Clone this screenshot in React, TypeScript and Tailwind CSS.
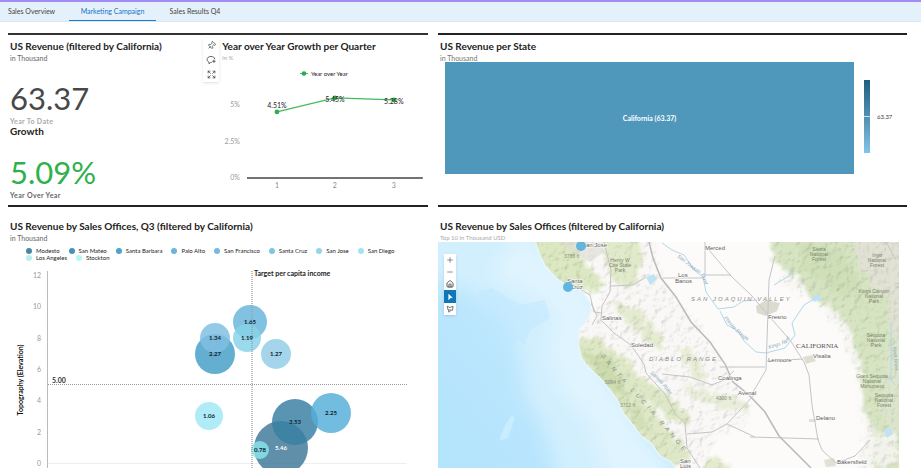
import React from "react";
import { Expand, Home, Minus, Pin, Plus } from "lucide-react";

const tabs = ["Sales Overview", "Marketing Campaign", "Sales Results Q4"];

type Pt = { x: number; y: number; label: string };

const quarters: Pt[] = [
  { x: 277, y: 112, label: "4.51%" },
  { x: 335, y: 98, label: "5.45%" },
  { x: 394, y: 100, label: "5.28%" },
];

const offices = [
  { name: "Modesto", color: "#4a87a3" },
  { name: "San Mateo", color: "#4793b4" },
  { name: "Santa Barbara", color: "#4da3cb" },
  { name: "Palo Alto", color: "#68b6dc" },
  { name: "San Francisco", color: "#78b9dd" },
  { name: "Santa Cruz", color: "#82c3e3" },
  { name: "San Jose", color: "#93d6ea" },
  { name: "San Diego", color: "#a2e4f5" },
  { name: "Los Angeles", color: "#b8eff5" },
  { name: "Stockton", color: "#b5f7f3" },
];

const bubbles = [
  { x: 281, y: 448, r: 27, color: "#3f7898", label: "5.46", light: true },
  { x: 295, y: 422, r: 23, color: "#377fa2", label: "3.53" },
  { x: 215, y: 354, r: 20, color: "#449dc6", label: "2.27" },
  { x: 331, y: 413, r: 20, color: "#54afd8", label: "2.25" },
  { x: 250, y: 322, r: 17, color: "#68b6dc", label: "1.65" },
  { x: 215, y: 338, r: 15, color: "#80bfe2", label: "1.34" },
  { x: 276, y: 354, r: 15, color: "#92cce6", label: "1.27" },
  { x: 247, y: 338, r: 14, color: "#86d2e8", label: "1.19" },
  { x: 209, y: 416, r: 14, color: "#a0e8f5", label: "1.06" },
  { x: 260, y: 450, r: 9, color: "#88e4ea", label: "0.78" },
];

const cities: Pt[] = [
  { x: 586, y: 247, label: "an Jose" },
  { x: 567, y: 283, label: "Santa" },
  { x: 570, y: 289, label: "Cruz" },
  { x: 705, y: 250, label: "Merced" },
  { x: 678, y: 277, label: "Los" },
  { x: 675, y: 283, label: "Banos" },
  { x: 602, y: 320, label: "Salinas" },
  { x: 631, y: 347, label: "Soledad" },
  { x: 718, y: 380, label: "Coalinga" },
  { x: 738, y: 395, label: "Avenal" },
  { x: 768, y: 319, label: "Fresno" },
  { x: 813, y: 358, label: "Visalia" },
  { x: 768, y: 362, label: "Lemoore" },
  { x: 816, y: 420, label: "Delano" },
  { x: 837, y: 464, label: "Bakersfield" },
  { x: 680, y: 463, label: "San" },
  { x: 680, y: 468, label: "Luis" },
];

const parks: { x: number; y: number; lines: string[] }[] = [
  { x: 620, y: 262, lines: ["Henry W", "Coe State", "Park"] },
  { x: 819, y: 251, lines: ["Sierra", "National", "Forest"] },
  { x: 877, y: 257, lines: ["Inyo", "National", "Forest"] },
  { x: 874, y: 293, lines: ["Kings Canyon", "National", "Park"] },
  { x: 876, y: 337, lines: ["Sequoia", "National", "Park"] },
  { x: 872, y: 378, lines: ["Giant Sequoia", "National", "Monument"] },
  { x: 884, y: 397, lines: ["Sequoia", "National", "Forest"] },
];

const peaks: Pt[] = [
  { x: 564, y: 258, label: "3786 ft" },
  { x: 605, y: 384, label: "5064 ft" },
  { x: 620, y: 407, label: "3712 ft" },
  { x: 716, y: 400, label: "4300 ft" },
];

function Title({ children }: { children: React.ReactNode }) {
  return <h2 className="whitespace-nowrap text-[10px] leading-4 font-bold text-[#222]">{children}</h2>;
}

function GrowthChart() {
  return (
    <svg viewBox="222 62 206 140" className="block h-auto w-full" role="img" aria-label="Year over Year growth line chart">
      <path d="M300 73.500h8" stroke="#3fb558" strokeWidth="1" />
      <circle cx="304" cy="73.500" r="2.300" fill="#2fa84a" />
      <text x="311" y="76" className="fill-[#222] text-[6px]">Year over Year</text>
      <g className="fill-[#999] text-[7px]" textAnchor="end">
        <text x="240" y="107">5%</text>
        <text x="240" y="144">2.5%</text>
        <text x="240" y="180">0%</text>
      </g>
      <path d="M247 178h176" stroke="#444" strokeWidth="1.500" />
      <polyline points={quarters.map((q) => `${q.x},${q.y}`).join(" ")} fill="none" stroke="#45b95c" strokeWidth="1.200" />
      {quarters.map((q, i) => (
        <g key={q.label} textAnchor="middle">
          <circle cx={q.x} cy={q.y} r="2.400" fill="#2fb04c" />
          <text x={q.x} y={i === 0 ? 108 : q.y + 4} className="fill-[#222] text-[7px]">{q.label}</text>
          <text x={q.x} y="188" className="fill-[#888] text-[7px]">{i + 1}</text>
        </g>
      ))}
    </svg>
  );
}

function BubbleChart() {
  return (
    <svg viewBox="8 262 420 206" className="block h-auto w-full" role="img" aria-label="Revenue by sales office bubble chart">
      <g className="fill-[#999] text-[7px]" textAnchor="end">
        {[12, 10, 8, 6, 4, 2, 0].map((v, i) => (
          <text key={v} x="41" y={278 + i * 31.300}>{v}</text>
        ))}
      </g>
      <path d="M47.500 271v197" stroke="#bbb" />
      <path d="M48 463.500h359" stroke="#eee" />
      <text transform="translate(23 380) rotate(-90)" textAnchor="middle" className="fill-[#111] text-[7px] font-bold">
        Topography (Elevation)
      </text>
      {bubbles.map((b) => (
        <circle key={b.label} cx={b.x} cy={b.y} r={b.r} fill={b.color} fillOpacity=".83" />
      ))}
      <path d="M48 384.500h360M252 271v197" stroke="#999" strokeWidth="1.200" strokeDasharray="1 1" />
      <text x="52" y="383" className="fill-[#333] text-[7px] font-bold">5.00</text>
      <text x="254" y="276" className="fill-[#222] text-[7px] font-bold">Target per capita income</text>
      {bubbles.map((b) => (
        <text
          key={b.label}
          x={b.x}
          y={b.y + 2}
          textAnchor="middle"
          className={b.light ? "fill-white text-[6px] font-bold" : "fill-[#0d2333] text-[6px] font-bold"}
        >
          {b.label}
        </text>
      ))}
    </svg>
  );
}

function CaliforniaMap() {
  const coast =
    "M536 242L540 254L546 266L556 277L568 286L576 287L584 292L591 303L591 313L586 323L580 330L579 345L582 358L589 367L600 377L610 389L618 400L624 413L634 425L640 434L652 443L660 455L672 462L676 468";
  return (
    <svg viewBox="438 242 461 226" className="block h-auto w-full" role="img" aria-label="Map of central California">
      <defs>
        <filter id="relief" x="-10%" y="-10%" width="120%" height="120%" colorInterpolationFilters="sRGB">
          <feTurbulence type="fractalNoise" baseFrequency=".14" numOctaves="3" seed="4" result="n" />
          <feDisplacementMap in="SourceGraphic" in2="n" scale="16" xChannelSelector="R" yChannelSelector="G" result="d" />
          <feGaussianBlur in="d" stdDeviation="1.500" result="s" />
          <feDiffuseLighting in="n" surfaceScale=".6" diffuseConstant="1.160" lightingColor="#fff" result="l">
            <feDistantLight azimuth="225" elevation="60" />
          </feDiffuseLighting>
          <feComposite in="l" in2="s" operator="in" result="c" />
          <feBlend in="c" in2="s" mode="multiply" />
        </filter>
        <filter id="soft" x="-20%" y="-20%" width="140%" height="140%">
          <feGaussianBlur stdDeviation="9" />
        </filter>
        <linearGradient id="sea" x1="0" x2="1" y1=".7" y2=".3">
          <stop offset="0" stopColor="#b5e4fd" />
          <stop offset=".5" stopColor="#c6ebfe" />
          <stop offset="1" stopColor="#dcf3fe" />
        </linearGradient>
        <clipPath id="land">
          <path d={`${coast}H899V242Z`} />
        </clipPath>
        <path id="lucia" d="M601 356L614 372L632 392L650 412L668 433L688 457" />
        <path id="sj" d="M677 257L690 267L701 275L709 293L716 306" />
        <path id="slough" d="M724 318L734 330L746 340L758 347" />
        <path id="salinasriver" d="M650 373L661 384L671 396L677 405" />
        <path id="kings" d="M769 349L787 343L793 330L797 318" />
        <path id="kern" d="M893 347L896 380" />
      </defs>
      <rect x="438" y="242" width="461" height="226" fill="url(#sea)" />
      <g filter="url(#soft)">
        <path d="M420 220H560L600 300L600 385L640 440L690 490H560L545 430L525 395L520 360L515 335L500 315L480 295L420 275Z" fill="#d2effe" />
        <path d="M520 230L600 300L600 360L650 440L690 490H610L590 425L560 390L548 350L555 315L530 295L490 275Z" fill="#dff4fe" />
      </g>
      <path d="M478 292L492 288L520 305L545 300L550 318L530 330L524 345L518 338L511 347L500 350L485 336L492 315Z" fill="#bde7fd" opacity=".5" />
      <path d="M505 425L512 415L515 418L508 438L499 441Z" fill="#cdeefe" opacity=".8" />
      <path d={coast} fill="none" stroke="#ecf9fe" strokeWidth="3" opacity=".6" />
      <g clipPath="url(#land)">
        <rect x="530" y="242" width="369" height="226" fill="#fcfbfa" />
        <g filter="url(#relief)">
          <path d="M526 232H655L665 280L700 325L735 375L752 405L748 425L715 438L700 478H655L560 370V320L600 300Z" fill="#faf8f6" />
          <path d="M780 285L812 300L840 330L858 380L864 430L855 478H909V232H790Z" fill="#f8f7f3" />
          <path d="M524 232H575L582 262L597 275L605 283L598 294L583 291L568 294L550 284L535 268Z" fill="#dce8c1" />
          <path d="M602 235H638L644 262L634 286L614 284L606 262Z" fill="#e1eaca" />
          <path d="M612 303L640 310L656 330L664 347L650 347L627 324Z" fill="#e4ebd0" />
          <path d="M572 340L598 338L623 356L640 378L668 393L692 420L686 428L665 414L646 398L660 420L684 445L688 464L665 466L638 440L612 412L592 380L572 362Z" fill="#dee8c6" />
          <path d="M582 352L606 354L624 380L630 395L616 396L595 378Z" fill="#ccdcae" />
          <path d="M618 396L634 400L648 424L650 436L634 424Z" fill="#d2e0b8" />
          <path d="M676 345L692 350L702 365L708 385L694 380L684 362Z" fill="#e7edd6" />
          <path d="M684 382L704 390L730 396L748 406L738 413L714 406L690 396Z" fill="#e9eeda" />
          <path d="M702 457L722 457L736 478H706Z" fill="#e3ebcf" />
          <path d="M767 230H910V480H870L878 440L862 405L861 370L850 330L834 310L812 296L795 276L774 262Z" fill="#d6e4c2" />
          <path d="M800 242L840 248L860 280L870 330L862 300L830 290L804 270Z" fill="#cfdfb8" />
          <path d="M852 230H910V350L888 330L890 300L870 285L858 262Z" fill="#e1e1d4" />
          <path d="M890 340L908 330V432L890 438L880 410Z" fill="#dce5cb" />
          <path d="M868 440L890 430L904 450L880 474Z" fill="#f2f3ea" />
        </g>
        <path d="M557 242H600L604 252L590 262L574 252Z" fill="#dcdbd3" opacity=".6" />
        <path d="M756 306L766 300L780 303L777 311L766 316L757 313Z" fill="#dddbcf" />
        <path d="M803 357L812 355L816 361L806 364Z" fill="#e0ddd2" />
        <path d="M809 419h7v3h-7ZM824 460L834 458L836 466L826 467Z" fill="#e3e0d5" />
        <path d="M646 277L654 274L657 279L650 285ZM812 297L818 294L822 299L814 302ZM884 430L891 427L893 434L887 438Z" fill="#bfe3f4" />
        <g fill="none" stroke="#b0d8ea" strokeWidth="1">
          <path d="M662 243L672 250L684 255L694 270L703 277L706 292L718 309L734 307L743 301L757 300" />
          <path d="M720 311L727 325L738 331L744 341L756 352L766 353L785 348L795 335L792 323L804 305L814 299" />
          <path d="M774 285L789 276L792 268" />
          <path d="M891 322V380L896 385" />
        </g>
        <g fill="none" stroke="#c4c4c8" strokeWidth="1">
          <path d="M705 242V275M663 278L703 278L706 275H731" />
          <path d="M709 250L731 276L752 296L768 315L790 340L804 362L809 375L812 405L818 440L822 450L836 463" />
          <path d="M775 256L769 280L766 370L753 392" />
          <path d="M720 367H765M767 361L803 359M750 437L786 438L819 439M755 437L727 424L754 395" />
          <path d="M602 321L614 333L631 345L644 364L646 373L665 394L676 415L685 423L687 448L700 468" />
          <path d="M687 434L712 432L727 424M662 374L690 377L712 385L724 380L734 371" />
          <path d="M604 242L611 270L610 292L602 306L601 321M591 303L597 316L592 325M611 286L633 285L646 277M576 287L590 295L594 312L602 313" />
          <path d="M886 242L896 260M836 463L855 456L870 440" />
        </g>
        <path d="M649 242L653 258L661 278L676 297L691 322L710 342L725 364L733 382L748 394L765 412L779 436L811 468" fill="none" stroke="#b8babd" strokeWidth="1.500" />
      </g>
      <g className="fill-[#86a9ba] font-['Liberation_Sans',Arial,sans-serif] text-[5px] italic">
        <text><textPath href="#sj">San Joaquin River</textPath></text>
        <text><textPath href="#slough">Fresno Slough</textPath></text>
        <text><textPath href="#salinasriver">Salinas River</textPath></text>
        <text><textPath href="#kings">Kings River</textPath></text>
        <text><textPath href="#kern">Kern River</textPath></text>
      </g>
      <g className="fill-[#8a8a8a] font-['Liberation_Sans',Arial,sans-serif] text-[6px] italic tracking-[2px]">
        <text x="691" y="301">SAN JOAQUIN VALLEY</text>
        <text x="649" y="361">DIABLO RANGE</text>
        <text className="tracking-[4px]"><textPath href="#lucia">SANTA LUCIA RANGE</textPath></text>
      </g>
      <g className="fill-[#8b8f80] font-['Liberation_Sans',Arial,sans-serif] text-[5px]">
        {peaks.map((p) => (
          <text key={p.label} x={p.x} y={p.y}>{p.label}</text>
        ))}
      </g>
      <g className="fill-[#77836a] font-['Liberation_Sans',Arial,sans-serif] text-[5px]" textAnchor="middle">
        {parks.map((p) => (
          <text key={`${p.x}-${p.y}`} y={p.y}>
            {p.lines.map((line, i) => (
              <tspan key={line} x={p.x} dy={i ? 5 : 0}>{line}</tspan>
            ))}
          </text>
        ))}
      </g>
      <text x="796" y="348" className="fill-[#555] font-['Liberation_Serif',serif] text-[7px]">CALIFORNIA</text>
      <g className="fill-[#5a5a5a] font-['Liberation_Sans',Arial,sans-serif] text-[6px]" stroke="#fff" strokeWidth="1" paintOrder="stroke">
        {cities.map((c) => (
          <text key={c.label + c.x} x={c.x} y={c.y}>{c.label}</text>
        ))}
      </g>
      <circle cx="581" cy="246" r="5" fill="#62b5dd" />
      <circle cx="568" cy="287" r="5" fill="#62b5dd" />
    </svg>
  );
}

function MapTools() {
  const cell = "flex h-3 w-3 items-center justify-center bg-white text-[#555]";
  return (
    <div className="absolute top-3 left-1.5 flex flex-col shadow-sm">
      <button className={cell} aria-label="Zoom in"><Plus size={8} strokeWidth={2} /></button>
      <button className={cell} aria-label="Zoom out"><Minus size={8} strokeWidth={2} /></button>
      <button className={cell} aria-label="Home"><Home size={8} strokeWidth={3} /></button>
      <button className="flex h-[13px] w-3 items-center justify-center bg-[#0f76b8]" aria-label="Select">
        <svg viewBox="0 0 10 10" className="h-2 w-2"><path d="M3 1L8.500 6L5.800 6.300L3 9Z" fill="#fff" /></svg>
      </button>
      <button className={cell} aria-label="Lasso select">
        <svg viewBox="0 0 10 10" className="h-2 w-2" fill="none" stroke="#555">
          <path d="M1.500 1.500L5 3.200L8.800 1.500L8.200 6.500L5 6.300L2.500 6L1.500 1.500ZM3 6.500L3.600 9L6 7" />
        </svg>
      </button>
    </div>
  );
}

export default function App() {
  return (
    <div className="border-t-2 border-[#a28cf8] bg-white font-['Lato',sans-serif]">
      <nav className="flex h-5 border-b border-[#dbe6ef] bg-[#e4f1fa]">
        {tabs.map((t, i) => (
          <button
            key={t}
            className={
              i === 1
                ? "w-[87px] border-b border-[#1b7bd0] text-[7px] text-[#1673c8]"
                : i === 0
                  ? "w-[69px] pr-1.5 text-[7px] text-[#444]"
                  : "w-[78px] text-[7px] text-[#444]"
            }
          >
            {t}
          </button>
        ))}
      </nav>

      <main className="grid grid-cols-[420fr_469fr] gap-x-2.5 pt-[11px] pr-3.5 pl-2">
        <section className="flex h-[172px] border-t-2 border-[#333] pt-[3px]">
          <div className="flex-1 pl-0.5">
            <Title>US Revenue (filtered by California)</Title>
            <p className="text-[7px] leading-2 text-[#666]">in Thousand</p>
            <p className="mt-[17px] text-[31px] leading-[38px] font-normal text-[#484848]">63.37</p>
            <p className="text-[7px] leading-2 font-bold tracking-wider text-[#aaa]">Year To Date</p>
            <h3 className="text-[10px] leading-3 font-bold text-[#222]">Growth</h3>
            <p className="mt-4 text-[31px] leading-[38px] font-normal text-[#2fb04c]">5.09%</p>
            <p className="text-[7px] leading-2 font-bold tracking-wider text-[#666]">Year Over Year</p>
          </div>
          <div className="mr-[3px] flex h-11 w-4 flex-col items-center justify-around bg-white text-[#444] shadow">
            <button aria-label="Pin"><Pin size={9} strokeWidth={2} className="rotate-45" /></button>
            <button aria-label="Add comment">
              <svg viewBox="0 0 12 12" className="h-2.5 w-2.5" fill="none" stroke="currentColor">
                <path d="M10.500 5C10.300 2.800 8.500 1.800 6 1.800C3.200 1.800 1.300 3.200 1.300 5.400C1.300 7 2.200 8 3.500 8.500L3.600 10.500L5.600 8.900H7M7.500 7.500H11.500M9.500 5.500V9.500" />
              </svg>
            </button>
            <button aria-label="Full screen"><Expand size={9} strokeWidth={2} /></button>
          </div>
          <div className="w-[49%]">
            <Title>Year over Year Growth per Quarter</Title>
            <p className="text-[6px] leading-2 text-[#aaa]">in %</p>
            <GrowthChart />
          </div>
        </section>

        <section className="border-t-2 border-[#222] pt-[3px] pl-0.5">
          <Title>US Revenue per State</Title>
          <p className="text-[7px] leading-2 text-[#777]">in Thousand</p>
          <div className="flex items-center pl-[5px]">
            <div className="flex h-28 flex-1 items-center justify-center bg-[#5098bb] text-[7px] font-bold text-white">
              California (63.37)
            </div>
            <div className="mb-[3px] ml-2.5 h-[73px] w-1.5 bg-linear-to-b from-[#1d5f80] to-[#80c4e6]">
              <div className="h-[37px] border-b border-[#c5e4f2]" />
            </div>
            <span className="mb-[3px] ml-[7px] w-[30px] text-[6px] text-[#444]">63.37</span>
          </div>
        </section>

        <section className="border-t-2 border-[#222] pt-[11px]">
          <div className="pl-0.5">
            <Title>US Revenue by Sales Offices, Q3 (filtered by California)</Title>
            <p className="text-[7px] leading-2 text-[#666]">in Thousand</p>
          </div>
          <ul className="mt-[5px] flex flex-wrap gap-x-[9px] pr-5 pb-px pl-[18px]">
            {offices.map((o) => (
              <li key={o.name} className="flex items-center gap-1 text-[6px] leading-[7px] text-[#222]">
                <span className="h-1.5 w-1.5 rounded-full" style={{ backgroundColor: o.color }} />
                {o.name}
              </li>
            ))}
          </ul>
          <BubbleChart />
        </section>

        <section className="border-t-2 border-[#222] pt-[11px]">
          <div className="pl-0.5">
            <Title>US Revenue by Sales Offices (filtered by California)</Title>
            <p className="text-[6px] leading-2 text-[#aaa]">Top 10 in Thousand USD</p>
          </div>
          <div className="relative mr-2">
            <CaliforniaMap />
            <MapTools />
          </div>
        </section>
      </main>
    </div>
  );
}
